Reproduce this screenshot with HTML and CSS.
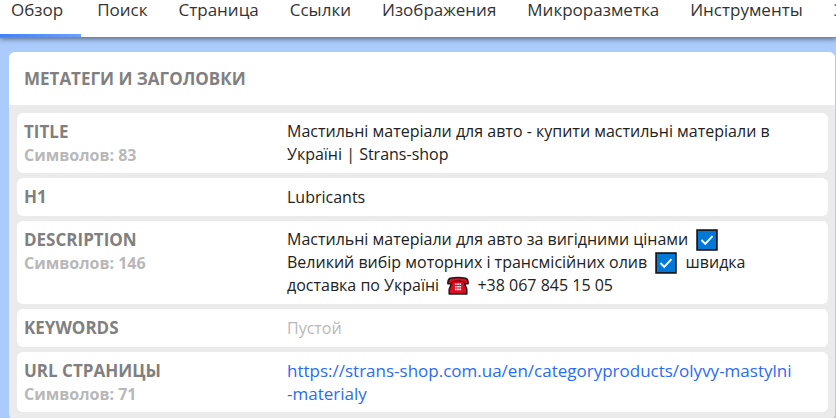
FILE: index.html
```html
<!DOCTYPE html>
<html lang="ru">
<head>
    <meta charset="UTF-8">
    <meta name="viewport" content="width=device-width, initial-scale=1">
    <title>Обзор</title>
    <link rel="stylesheet" href="styles.css">
</head>
<body>
    <nav class="tabs">
        <a class="tab active" href="#overview">Обзор</a>
        <a class="tab" href="#search">Поиск</a>
        <a class="tab" href="#page">Страница</a>
        <a class="tab" href="#links">Ссылки</a>
        <a class="tab" href="#images">Изображения</a>
        <a class="tab" href="#microdata">Микроразметка</a>
        <a class="tab" href="#tools">Инструменты</a>
        <a class="tab" href="#export">Экспорт</a>
    </nav>

    <main class="content">
        <section class="panel" id="overview">
            <h2 class="panel-title">МЕТАТЕГИ И ЗАГОЛОВКИ</h2>
            <dl class="rows">
                <div class="row">
                    <dt>TITLE <span class="count">Символов: 83</span></dt>
                    <dd>Мастильні матеріали для авто - купити мастильні матеріали в Україні | Strans-shop</dd>
                </div>
                <div class="row">
                    <dt>H1</dt>
                    <dd>Lubricants</dd>
                </div>
                <div class="row">
                    <dt>DESCRIPTION <span class="count">Символов: 146</span></dt>
                    <dd>Мастильні матеріали для авто за вигідними цінами
                        <svg class="emoji" viewBox="0 0 20 20"><rect x="1" y="1" width="18" height="18" fill="#0078d7" stroke="#1b1b1b" stroke-width="1.6"/><path d="M5 10l3.4 3.6L15 6.4" fill="none" stroke="#fff" stroke-width="1.7"/></svg>
                        Великий вибір моторних і трансмісійних олив
                        <svg class="emoji" viewBox="0 0 20 20"><rect x="1" y="1" width="18" height="18" fill="#0078d7" stroke="#1b1b1b" stroke-width="1.6"/><path d="M5 10l3.4 3.6L15 6.4" fill="none" stroke="#fff" stroke-width="1.7"/></svg>
                        швидка доставка по Україні
                        <svg class="emoji" viewBox="0 0 20 20"><path d="M3 3Q10 1.4 17 3Q19.4 4 19.2 8H16L18 13V17.3H2V13L4 8H.8Q.6 4 3 3Z" fill="#e00b22" stroke="#1b1b1b" stroke-width="1.4" stroke-linejoin="round"/><path d="M4.5 7.6V6Q10 4.6 15.5 6V7.6M8 4.8V6.6M12 4.8V6.6" fill="none" stroke="#6d0812" stroke-width=".9"/><path d="M7.2 8.4h5.6M7.2 10.7h5.6M7.2 13h5.6" stroke="#fff" stroke-width="1.5" stroke-dasharray="1.5 .55"/></svg>
                        +38 067 845 15 05</dd>
                </div>
                <div class="row">
                    <dt>KEYWORDS</dt>
                    <dd class="empty">Пустой</dd>
                </div>
                <div class="row">
                    <dt>URL СТРАНИЦЫ <span class="count">Символов: 71</span></dt>
                    <dd><a class="url" href="https://strans-shop.com.ua/en/categoryproducts/olyvy-mastylni-materialy">https://strans-shop.com.ua/en/categoryproducts/olyvy-mastylni<wbr>-materialy</a></dd>
                </div>
            </dl>
        </section>
    </main>
</body>
</html>
```
FILE: styles.css
```css
* {
    box-sizing: border-box;
}
body {
    margin: 0;
    font-family: "Segoe UI", "Open Sans", "Noto Sans", sans-serif;
    font-size: 17px;
    line-height: 23px;
    color: #222;
    background: #abcbfd;
    overflow: hidden;
}
a {
    color: #2a6bf5;
    text-decoration: none;
}
.tabs {
    display: flex;
    overflow: hidden;
    background: #fff;
    border-bottom: 1px solid #7386ab;
    box-shadow: 0 1px 5px rgba(0,0,0,0.5);
}
.tab {
    flex: none;
    padding: 0 15px 15px 16px;
    border-bottom: 3px solid transparent;
    line-height: 19px;
    color: #333;
}
.tab.active {
    padding-left: 11px;
    padding-right: 18px;
    border-image: linear-gradient(to right, #4080f7, #6fa0fb) 1;
}
.content {
    padding: 14px 1px 0 9px;
}
.panel {
    background: #ebebeb;
    border-radius: 6px;
    overflow: hidden;
}
.panel-title {
    margin: 0;
    padding: 15px;
    background: #fff;
    color: #808080;
    font-size: 17px;
    font-weight: 700;
}
.rows {
    display: grid;
    gap: 5px;
    margin: 0;
    padding: 8px 7px 8px 8px;
}
.row {
    display: grid;
    grid-template-columns: 33% 1fr;
    align-items: center;
    min-height: 38px;
    padding: 7px;
    background: #fff;
    border-radius: 6px;
}
dt {
    align-self: start;
    color: #808080;
    font-weight: 700;
    line-height: 24px;
}
.count {
    display: block;
    color: #b8b8b8;
    font-size: 16px;
    font-weight: 700;
    line-height: 22px;
}
dd {
    margin: 0;
    padding-right: 28px;
    font-size: 16px;
}
.url {
    display: block;
    font-size: 17px;
    white-space: nowrap;
}
.empty {
    color: #b8b8b8;
}
.emoji {
    width: 22px;
    height: 22px;
    margin: 0 4px;
    vertical-align: -6px;
}
dd:has(.emoji) {
    padding-right: 48px;
}
```
